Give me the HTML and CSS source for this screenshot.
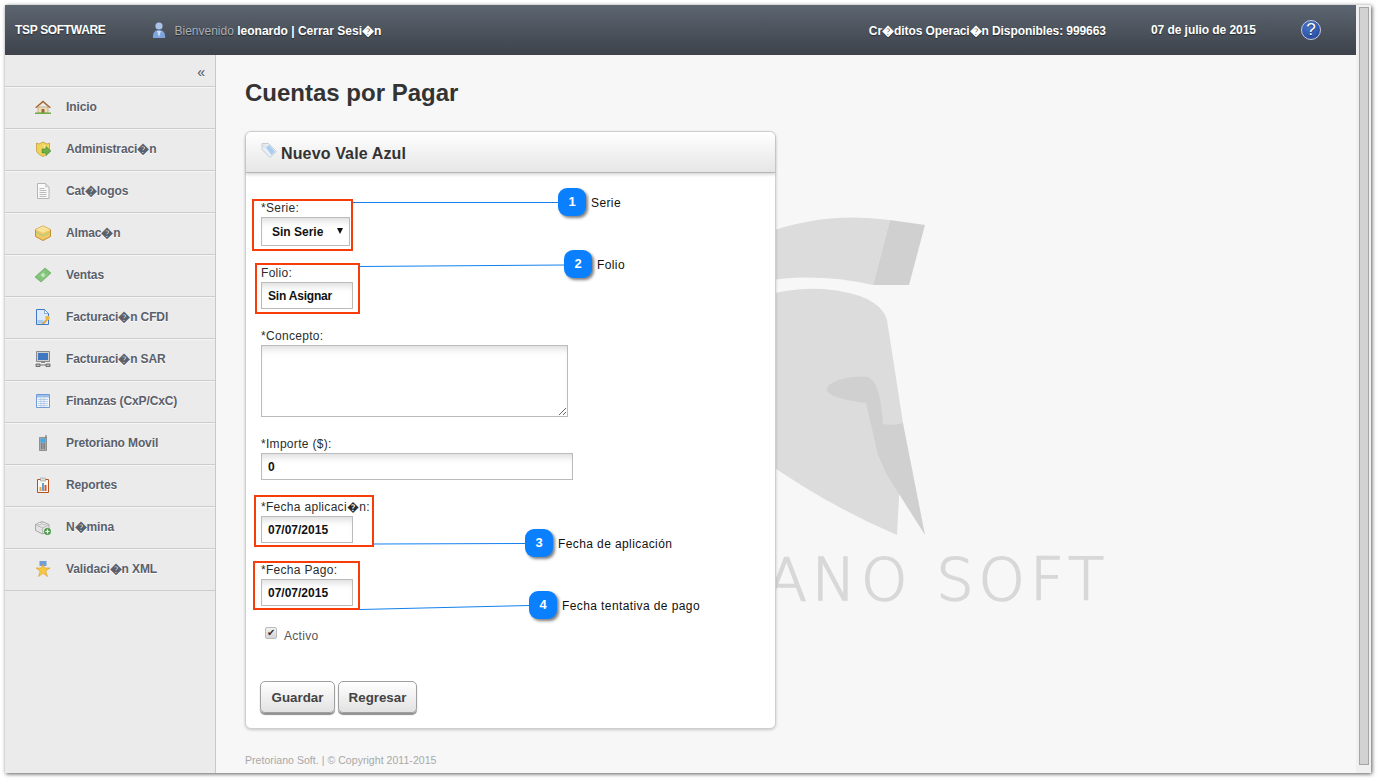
FILE: index.html
```html
<!DOCTYPE html>
<html lang="es">
<head>
    <meta charset="UTF-8">
    <meta name="viewport" content="width=device-width, initial-scale=1.0">
    <title>Cuentas por Pagar</title>
    <link rel="stylesheet" href="styles.css">
</head>
<body>
    <div class="window">
        <div class="app">
            <header class="topbar">
                <span class="brand">TSP SOFTWARE</span>
                <svg class="user-icon" width="14" height="17" viewBox="0 0 14 17"><circle cx="7" cy="4" r="3.6" fill="#a9c3ea"/><path d="M1 16c-.6-5 1.500-8 6-8s6.600 3 6 8z" fill="#7fa3dc"/><path d="M5 9h4l-2 6z" fill="#cfe0f7"/></svg>
                <span class="welcome">Bienvenido <b>leonardo | Cerrar Sesi�n</b></span>
                <b class="credits">Cr�ditos Operaci�n Disponibles: 999663</b>
                <b class="date">07 de julio de 2015</b>
                <span class="help">?</span>
            </header>
            <div class="content">
                <nav class="sidebar">
                    <div class="collapse">«</div>
                    <a class="nav-item">
                        <svg class="nav-icon" viewBox="0 0 16 16"><path d="M3 8h10v6H3z" fill="#eeddb8" stroke="#a98c5c" stroke-width=".6"/><path d="M6.500 10h3v4h-3z" fill="#9a6b3a"/><path d="M0 8.500 8 1.500l8 7-1.500.6L8 3.600 1.500 9.100z" fill="#a5662c"/><path d="M0 13.500h16V15H0z" fill="#6fae45"/></svg>
                        Inicio
                    </a>
                    <a class="nav-item">
                        <svg class="nav-icon" viewBox="0 0 16 16"><path d="M1.500 2 4 3l4-2 4 2 2.500-1v7c0 3-3 5-6.500 6.500C4.500 14 1.500 12 1.500 9z" fill="#efd35a" stroke="#b9962c" stroke-width=".7"/><path d="M8 4.500h2V7z" fill="#fff3b0"/><path d="M7 8h4V5.500L16 10l-5 4.500V12H7z" fill="#6fb04a" stroke="#3f7d2a" stroke-width=".5"/></svg>
                        Administraci�n
                    </a>
                    <a class="nav-item">
                        <svg class="nav-icon" viewBox="0 0 16 16"><path d="M2.500.5h8l3.500 3.500v11.500H2.500z" fill="#fafafa" stroke="#b5b5b5"/><path d="M10.500.5V4H14z" fill="#ddd" stroke="#b5b5b5" stroke-width=".5"/><path d="M4.500 5.500h5M4.500 7.500h7M4.500 9.500h7M4.500 11.500h7M4.500 13.500h7" stroke="#aaa" stroke-width=".8"/></svg>
                        Cat�logos
                    </a>
                    <a class="nav-item">
                        <svg class="nav-icon" viewBox="0 0 16 16"><path d="M8 1 15.500 4.500v7L8 15.500.5 11.500v-7z" fill="#f0c666" stroke="#c48f2e"/><path d="M8 1 15.500 4.500 8 8 .5 4.500z" fill="#f8e29a"/><path d="M1 6.500 8 10l7-3.500v1.500L8 11.500 1 8z" fill="#b5cf76"/></svg>
                        Almac�n
                    </a>
                    <a class="nav-item">
                        <svg class="nav-icon" viewBox="0 0 16 16"><path d="M0 10 10 1l6 5-10 9z" fill="#7fc277" stroke="#5fa257" stroke-width=".6"/><circle cx="8" cy="8" r="2" fill="#c5e6bd"/><path d="M3 10l7-6M6 12.500l7-6" stroke="#a8dba0" stroke-width=".6"/></svg>
                        Ventas
                    </a>
                    <a class="nav-item">
                        <svg class="nav-icon" viewBox="0 0 16 16"><path d="M1.500.5h8l4 4v11h-12z" fill="#dfeafa" stroke="#3f78c8"/><path d="M9.500.5v4h4z" fill="#fff" stroke="#3f78c8" stroke-width=".6"/><path d="M2.500 11h6v3.500h-6z" fill="#a9c8ee"/><circle cx="12.500" cy="9" r="2.300" fill="#edb93f"/><path d="M11 10.500 6.500 15h2.500l3.500-3.500z" fill="#d9a02c"/></svg>
                        Facturaci�n CFDI
                    </a>
                    <a class="nav-item">
                        <svg class="nav-icon" viewBox="0 0 16 16"><path d="M1.500.5h13v10h-13z" fill="#cfcfcf" stroke="#8a8a8a"/><path d="M3 2h10v7H3z" fill="#3f78c0"/><path d="M6 11h4v1H6z" fill="#888"/><path d="M1 13h4v2.500H1zM11 13h4v2.500h-4zM5 14h6" fill="#bbb" stroke="#555" stroke-width=".8"/></svg>
                        Facturaci�n SAR
                    </a>
                    <a class="nav-item">
                        <svg class="nav-icon" viewBox="0 0 16 16"><path d="M1.500 1.500h13v13h-13z" fill="#f2f7fd" stroke="#6f9bd8"/><path d="M2 2h12v2.500H2z" fill="#9dbfe9"/><path d="M3 6.500h10M3 8.500h10M3 10.500h10M3 12.500h10M6 5v9M9 5v9" stroke="#a5bfdf" stroke-width=".7"/></svg>
                        Finanzas (CxP/CxC)
                    </a>
                    <a class="nav-item">
                        <svg class="nav-icon" viewBox="0 0 16 16"><path d="M4.500 2.500h7v13h-7z" fill="#a6abb0" stroke="#777" stroke-width=".7"/><path d="M10.500 0h1v3h-1z" fill="#666"/><path d="M5.500 3.500h5v4h-5z" fill="#46a8e8"/><path d="M6 9h1M7.500 9h1M9 9h1M6 11h1M7.500 11h1M9 11h1M6 13h1M7.500 13h1M9 13h1" stroke="#555"/></svg>
                        Pretoriano Movil
                    </a>
                    <a class="nav-item">
                        <svg class="nav-icon" viewBox="0 0 16 16"><path d="M2.500 2.500h11v13h-11z" fill="#fdf8ee" stroke="#b3521e"/><path d="M5.500 1h5v3h-5z" fill="#ddd" stroke="#999" stroke-width=".6"/><path d="M4.500 10h2v4h-2z" fill="#e6a33a"/><path d="M7 6h2v8H7z" fill="#5aa2dc"/><path d="M9.500 8h2v6h-2z" fill="#d9553a"/></svg>
                        Reportes
                    </a>
                    <a class="nav-item">
                        <svg class="nav-icon" viewBox="0 0 16 16"><path d="M.5 5.500 7 2.500l7 3v6l-6.500 3.500L.5 11.500z" fill="#e2e2e2" stroke="#9a9a9a" stroke-width=".8"/><path d="M.5 5.500 7.500 9l6.500-3.500M7.500 9v6" fill="none" stroke="#aaa" stroke-width=".7"/><ellipse cx="4.500" cy="4.500" rx="2" ry="1" fill="#f2f2f2" stroke="#999" stroke-width=".5"/><ellipse cx="9" cy="4.500" rx="2" ry="1" fill="#f2f2f2" stroke="#999" stroke-width=".5"/><circle cx="12.500" cy="12.500" r="3.200" fill="#4aa84a" stroke="#2e7d32" stroke-width=".5"/><path d="M12.500 10.500v4M10.500 12.500h4" stroke="#fff" stroke-width="1.200"/></svg>
                        N�mina
                    </a>
                    <a class="nav-item">
                        <svg class="nav-icon" viewBox="0 0 16 16"><path d="M4.500 0h7v5h-7z" fill="#6f9fd8"/><path d="M8 3l1.600 4H15l-4.200 3 1.700 5.500L8 12.300 3.500 15.500 5.200 10 1 7h5.400z" fill="#f6c945" stroke="#d99a26" stroke-width=".6"/></svg>
                        Validaci�n XML
                    </a>
                </nav>
                <main class="main">
                    <svg class="helmet" width="300" height="340" viewBox="680 210 300 340">
                        <path d="M680 280Q780 205 890 220L873 285Q770 262 680 310z" fill="#dcdcdc"/>
                        <path d="M890 220 925 225 909 285H873z" fill="#d0d0d0"/>
                        <path d="M680 350Q740 285 823 289 880 294 887 320L903 423 897 535Q790 490 680 395z" fill="#dcdcdc"/>
                        <path d="M827 389C828 380 855 375 868 377 880 382 882 410 883 424 890 425 897 425 903 423L925 535 887 475 878 455 866 403C850 401 827 397 827 389z" fill="#d0d0d0"/>
                    </svg>
                    <div class="watermark">ANO SOFT</div>
                    <h1 class="page-title">Cuentas por Pagar</h1>
                    <section class="panel">
                        <div class="panel-header">
                            <svg class="tag-icon" width="16" height="16" viewBox="0 0 16 16"><path d="M1 1.500h6.500L15.500 9.500 9 15.500 1 7.500z" fill="#e9eef5" stroke="#c5cdd6"/><path d="M5 5.500 8 3l6 6.500-3.500 3.500z" fill="#a9cdf0"/><circle cx="3.500" cy="3.800" r="1" fill="#fff" stroke="#b5bdc6" stroke-width=".5"/></svg>
                            <h2>Nuevo Vale Azul</h2>
                        </div>
                        <form class="panel-body">
                            <div class="field">
                                <label>*Serie:</label>
                                <div class="select-wrap">
                                    <select class="input select"><option>Sin Serie</option></select>
                                </div>
                            </div>
                            <div class="field">
                                <label>Folio:</label>
                                <input class="input input-short input-folio" type="text" value="Sin Asignar">
                            </div>
                            <div class="field">
                                <label>*Concepto:</label>
                                <textarea class="input textarea"></textarea>
                            </div>
                            <div class="field">
                                <label>*Importe ($):</label>
                                <input class="input input-wide" type="text" value="0">
                            </div>
                            <div class="field">
                                <label>*Fecha aplicaci�n:</label>
                                <input class="input input-short" type="text" value="07/07/2015">
                            </div>
                            <div class="field">
                                <label>*Fecha Pago:</label>
                                <input class="input input-short" type="text" value="07/07/2015">
                            </div>
                            <div class="check-row">
                                <input class="check" type="checkbox" checked>
                                <span>Activo</span>
                            </div>
                            <div class="actions">
                                <button class="btn btn-save" type="button">Guardar</button>
                                <button class="btn btn-back" type="button">Regresar</button>
                            </div>
                        </form>
                    </section>
                    <footer class="footer">Pretoriano Soft. | © Copyright 2011-2015</footer>
                </main>
            </div>
        </div>
        <div class="scrollbar"><div class="thumb"></div></div>
    </div>

    <!-- callouts painted over the screenshot -->
    <svg class="callout-lines" width="1380" height="782" viewBox="0 0 1380 782">
        <path d="M353 202.500H558M359 266.500 564 265M374 544 525 543.500M360 609.500 529 605.500" fill="none" stroke="#1480f0"/>
    </svg>
    <div class="mark mark-1"></div>
    <div class="mark mark-2"></div>
    <div class="mark mark-3"></div>
    <div class="mark mark-4"></div>
    <div class="bubble bubble-1">1</div>
    <div class="bubble bubble-2">2</div>
    <div class="bubble bubble-3">3</div>
    <div class="bubble bubble-4">4</div>
    <div class="note note-1">Serie</div>
    <div class="note note-2">Folio</div>
    <div class="note note-3">Fecha de aplicación</div>
    <div class="note note-4">Fecha tentativa de pago</div>
</body>
</html>
```
FILE: styles.css
```css
html, body {
    margin: 0;
    height: 782px;
    overflow: hidden;
    background: #ffffff;
}

body {
    position: relative;
    font-family: "Liberation Sans", Arial, sans-serif;
    font-size: 12px;
    color: #333;
    padding: 5px;
    box-sizing: border-box;
}

.window {
    display: flex;
    width: 1366px;
    height: 768px;
    box-shadow: 1px 1px 4px rgba(0, 0, 0, 0.65);
}

.app {
    display: flex;
    flex-direction: column;
    width: 1351px;
}

.topbar {
    display: flex;
    align-items: center;
    flex: 0 0 50px;
    padding: 0 35px 0 10px;
    background: linear-gradient(#5c6570, #3d424b);
    color: #fff;
    text-shadow: 0 1px 1px rgba(0, 0, 0, 0.5);
}

.brand {
    font-weight: bold;
    letter-spacing: -0.33px;
}

.user-icon {
    margin-left: 46px;
}

.welcome {
    margin-left: 9px;
    color: #a9afb8;
}

.welcome b {
    color: #fff;
}

.credits {
    margin-left: auto;
    letter-spacing: -0.08px;
}

.date {
    margin-left: 45px;
    letter-spacing: -0.05px;
}

.help {
    display: flex;
    align-items: center;
    justify-content: center;
    width: 18px;
    height: 18px;
    margin-left: 45px;
    border: 1px solid #c3cbe0;
    border-radius: 50%;
    background: radial-gradient(circle at 40% 30%, #4a78cc, #1f3f95);
    font-size: 17px;
}

.content {
    display: flex;
    flex: 1;
    min-height: 0;
}

.sidebar {
    width: 210px;
    flex: none;
    background: #ebebeb;
    border-right: 1px solid #c8c8c8;
}

.collapse {
    box-sizing: border-box;
    height: 32px;
    padding: 8px 10px 0 0;
    text-align: right;
    font-size: 14px;
    line-height: 18px;
    color: #4a525e;
    border-bottom: 1px solid #cccccc;
}

.nav-item {
    display: flex;
    align-items: center;
    box-sizing: border-box;
    height: 42px;
    padding: 0 0 3px 30px;
    border-top: 1px solid #f6f6f6;
    border-bottom: 1px solid #cccccc;
    font-weight: bold;
    letter-spacing: -0.12px;
    color: #5a606b;
    text-shadow: 0 1px 0 #fff;
}

.nav-icon {
    width: 16px;
    height: 16px;
    margin-right: 15px;
}

.main {
    position: relative;
    flex: 1;
    padding: 24px 0 0 29px;
    background: #f7f7f7;
    overflow: hidden;
}

.helmet {
    position: absolute;
    left: 464px;
    top: 155px;
}

.watermark {
    position: absolute;
    right: 247px;
    top: 490px;
    font-family: "DejaVu Sans", sans-serif;
    font-size: 59px;
    font-weight: 200;
    line-height: 70px;
    letter-spacing: 5px;
    white-space: nowrap;
    color: #d8d8d8;
    -webkit-text-stroke: 1.5px #d8d8d8;
}

.page-title {
    position: relative;
    margin: 0 0 24px;
    font-size: 24px;
    line-height: 28px;
    color: #333;
}

.panel {
    position: relative;
    box-sizing: border-box;
    width: 531px;
    height: 598px;
    background: #fff;
    border: 1px solid #cfcfcf;
    border-radius: 6px;
    box-shadow: 0 1px 3px rgba(0, 0, 0, 0.2);
}

.panel-header {
    display: flex;
    align-items: center;
    box-sizing: border-box;
    height: 41px;
    padding-left: 15px;
    border-bottom: 1px solid #b5b5b5;
    border-radius: 6px 6px 0 0;
    background: linear-gradient(#ffffff, #e6e6e6);
    box-shadow: 0 2px 3px rgba(0, 0, 0, 0.14);
}

.tag-icon {
    margin: -4px 4px 0 0;
}

.panel-header h2 {
    margin: 0;
    padding-top: 4px;
    font-size: 16px;
    letter-spacing: 0.14px;
    color: #333;
}

.panel-body {
    padding: 27px 0 0 15px;
}

.field {
    margin-bottom: 19px;
}

.field label {
    display: block;
    width: fit-content;
    padding-top: 1px;
    line-height: 15px;
    margin-bottom: 1px;
    letter-spacing: 0.3px;
    color: #2c2c2c;
}

.input {
    display: block;
    box-sizing: border-box;
    height: 27px;
    margin: 0;
    padding: 0 6px;
    border: 1px solid #bbbbbb;
    border-radius: 0;
    background: #fff;
    box-shadow: inset 0 7px 7px -4px rgba(0, 0, 0, 0.14);
    font-family: inherit;
    font-size: 12px;
    font-weight: bold;
    color: #111;
}

.input-short {
    width: 92px;
}

.input-folio {
    letter-spacing: -0.2px;
}

.input-wide {
    width: 312px;
}

.textarea {
    width: 307px;
    height: 72px;
}

.select-wrap {
    position: relative;
    width: 89px;
}

.select-wrap::after {
    content: "";
    position: absolute;
    right: 7px;
    top: 11px;
    border: 3.500px solid transparent;
    border-top: 6px solid #111;
    border-bottom: 0;
}

.select {
    width: 89px;
    height: 29px;
    padding-left: 10px;
    appearance: none;
}

.check-row {
    display: flex;
    align-items: center;
    height: 20px;
    padding-left: 4px;
    letter-spacing: 0.3px;
    color: #555;
}

.check-row span {
    padding-top: 1px;
}

.check {
    position: relative;
    width: 12px;
    height: 12px;
    margin: -4px 7px 0 0;
    border: 1px solid #bbb;
    border-radius: 2px;
    background: linear-gradient(#f2f2f2, #d5d5d5);
    appearance: none;
}

.check::after {
    content: "✔";
    position: absolute;
    left: 1px;
    top: -1px;
    font-size: 10px;
    line-height: 12px;
    color: #333;
}

.actions {
    display: flex;
    gap: 3px;
    margin: 36px 0 0 -1px;
}

.btn {
    height: 32px;
    padding: 0;
    border: 1px solid #a0a0a0;
    border-radius: 5px;
    background: linear-gradient(#ffffff, #e2e2e2);
    box-shadow: 0 2px 1px #8f8f8f;
    font-family: inherit;
    font-size: 13.330px;
    font-weight: bold;
    color: #444;
}

.btn-save {
    width: 75px;
}

.btn-back {
    width: 79px;
}

.footer {
    position: relative;
    margin-top: 24px;
    font-size: 10.500px;
    line-height: 14px;
    letter-spacing: 0.05px;
    color: #a8a8a8;
}

.scrollbar {
    flex: 1;
    box-sizing: border-box;
    padding: 2px 2px 8px 3px;
    background: #f0f0f0;
}

.thumb {
    height: 100%;
    box-sizing: border-box;
    border: 1px solid #a5a5a5;
    background: #d2d2d2;
}

/* callouts */
.callout-lines {
    position: absolute;
    left: 0;
    top: 0;
}

.mark {
    position: absolute;
    box-sizing: border-box;
    border: 2px solid #f83c0a;
}

.mark-1 { left: 252px; top: 199px; width: 101px; height: 52px; }
.mark-2 { left: 255px; top: 263px; width: 105px; height: 51px; }
.mark-3 { left: 254px; top: 495px; width: 120px; height: 52px; }
.mark-4 { left: 253px; top: 561px; width: 107px; height: 49px; }

.bubble {
    position: absolute;
    width: 28px;
    height: 28px;
    border-radius: 9px;
    background: #0a80ff;
    box-shadow: 2px 2px 3px rgba(0, 0, 0, 0.5);
    color: #fff;
    font-size: 13px;
    font-weight: bold;
    line-height: 28px;
    text-align: center;
}

.bubble-1 { left: 558px; top: 188px; }
.bubble-2 { left: 564px; top: 250px; }
.bubble-3 { left: 525px; top: 529px; }
.bubble-4 { left: 529px; top: 591px; }

.note {
    position: absolute;
    line-height: 14px;
    letter-spacing: 0.4px;
    color: #111;
}

.note-1 { left: 591px; top: 196px; }
.note-2 { left: 597px; top: 258px; }
.note-3 { left: 558px; top: 537px; }
.note-4 { left: 562px; top: 599px; }
```
